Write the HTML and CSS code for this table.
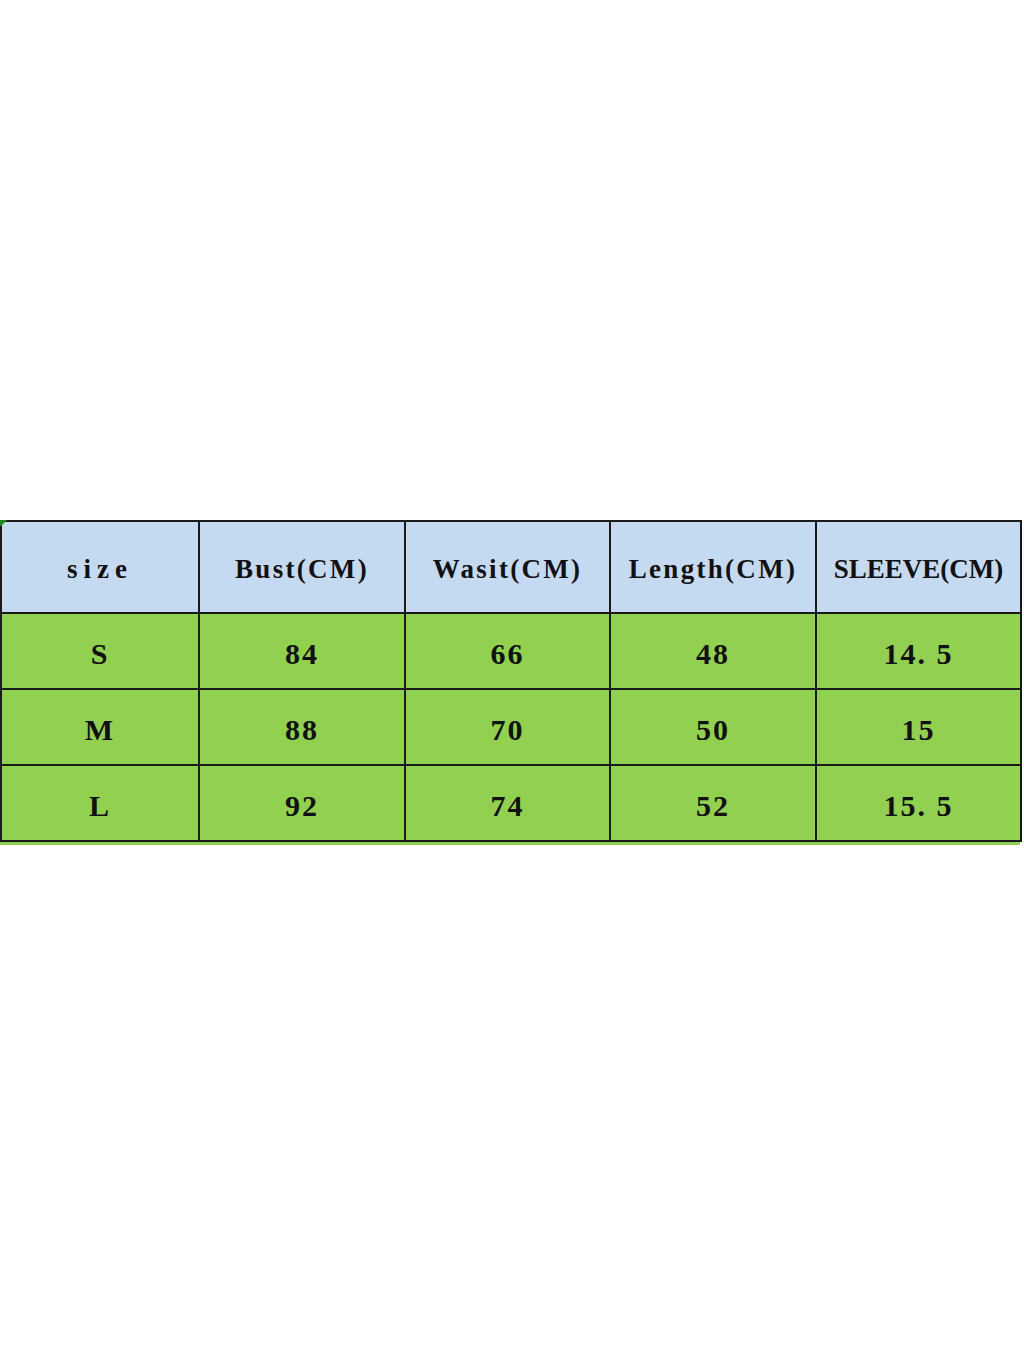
FILE: index.html
```html
<!DOCTYPE html>
<html>
<head>
<meta charset="utf-8">
<link rel="stylesheet" href="styles.css">
</head>
<body>
<div class="sheet">
  <span class="marker"></span>
  <table class="sizes">
    <colgroup>
      <col class="c1"><col class="c2"><col class="c3"><col class="c4"><col class="c5">
    </colgroup>
    <thead>
      <tr class="head"><th class="w-size">size</th><th>Bust(CM)</th><th>Wasit(CM)</th><th>Length(CM)</th><th class="w-sleeve">SLEEVE(CM)</th></tr>
    </thead>
    <tbody>
      <tr class="row"><td>S</td><td>84</td><td>66</td><td>48</td><td>14.&nbsp;5</td></tr>
      <tr class="row"><td>M</td><td>88</td><td>70</td><td>50</td><td>15</td></tr>
      <tr class="row"><td>L</td><td>92</td><td>74</td><td>52</td><td>15.&nbsp;5</td></tr>
    </tbody>
  </table>
  <div class="tail"></div>
</div>
</body>
</html>
```

FILE: styles.css
```css
html, body {
  margin: 0;
  padding: 0;
  background: #ffffff;
}
.sheet {
  position: relative;
  width: 1020px;
  margin-top: 520px;
}
.marker {
  position: absolute;
  left: 0;
  top: 0;
  width: 0;
  height: 0;
  border-top: 7px solid #1a8a1a;
  border-right: 7px solid transparent;
  z-index: 2;
}
.sizes {
  border-collapse: collapse;
  table-layout: fixed;
  width: 1020px;
  font-family: "Liberation Serif", "Times New Roman", serif;
  font-weight: bold;
  color: #111111;
}
.c1 { width: 198px; }
.c2 { width: 206px; }
.c3 { width: 205px; }
.c4 { width: 206px; }
.c5 { width: 205px; }
.sizes th, .sizes td {
  border: 2px solid #1a1a1a;
  text-align: center;
  padding: 0;
  line-height: 30px;
}
.sizes th {
  background: #c5d9f1;
  font-weight: bold;
  font-size: 27px;
  letter-spacing: 2.3px;
  padding-top: 4px;
}
.sizes th.w-size { letter-spacing: 6px; }
.sizes th.w-sleeve { letter-spacing: 0; }
.sizes td {
  background: #92d050;
  font-size: 30px;
  letter-spacing: 2px;
  padding-top: 6px;
}
.head { height: 92px; }
.row { height: 76px; }
.tail {
  height: 3px;
  width: 1020px;
  background: #92d050;
}
```
